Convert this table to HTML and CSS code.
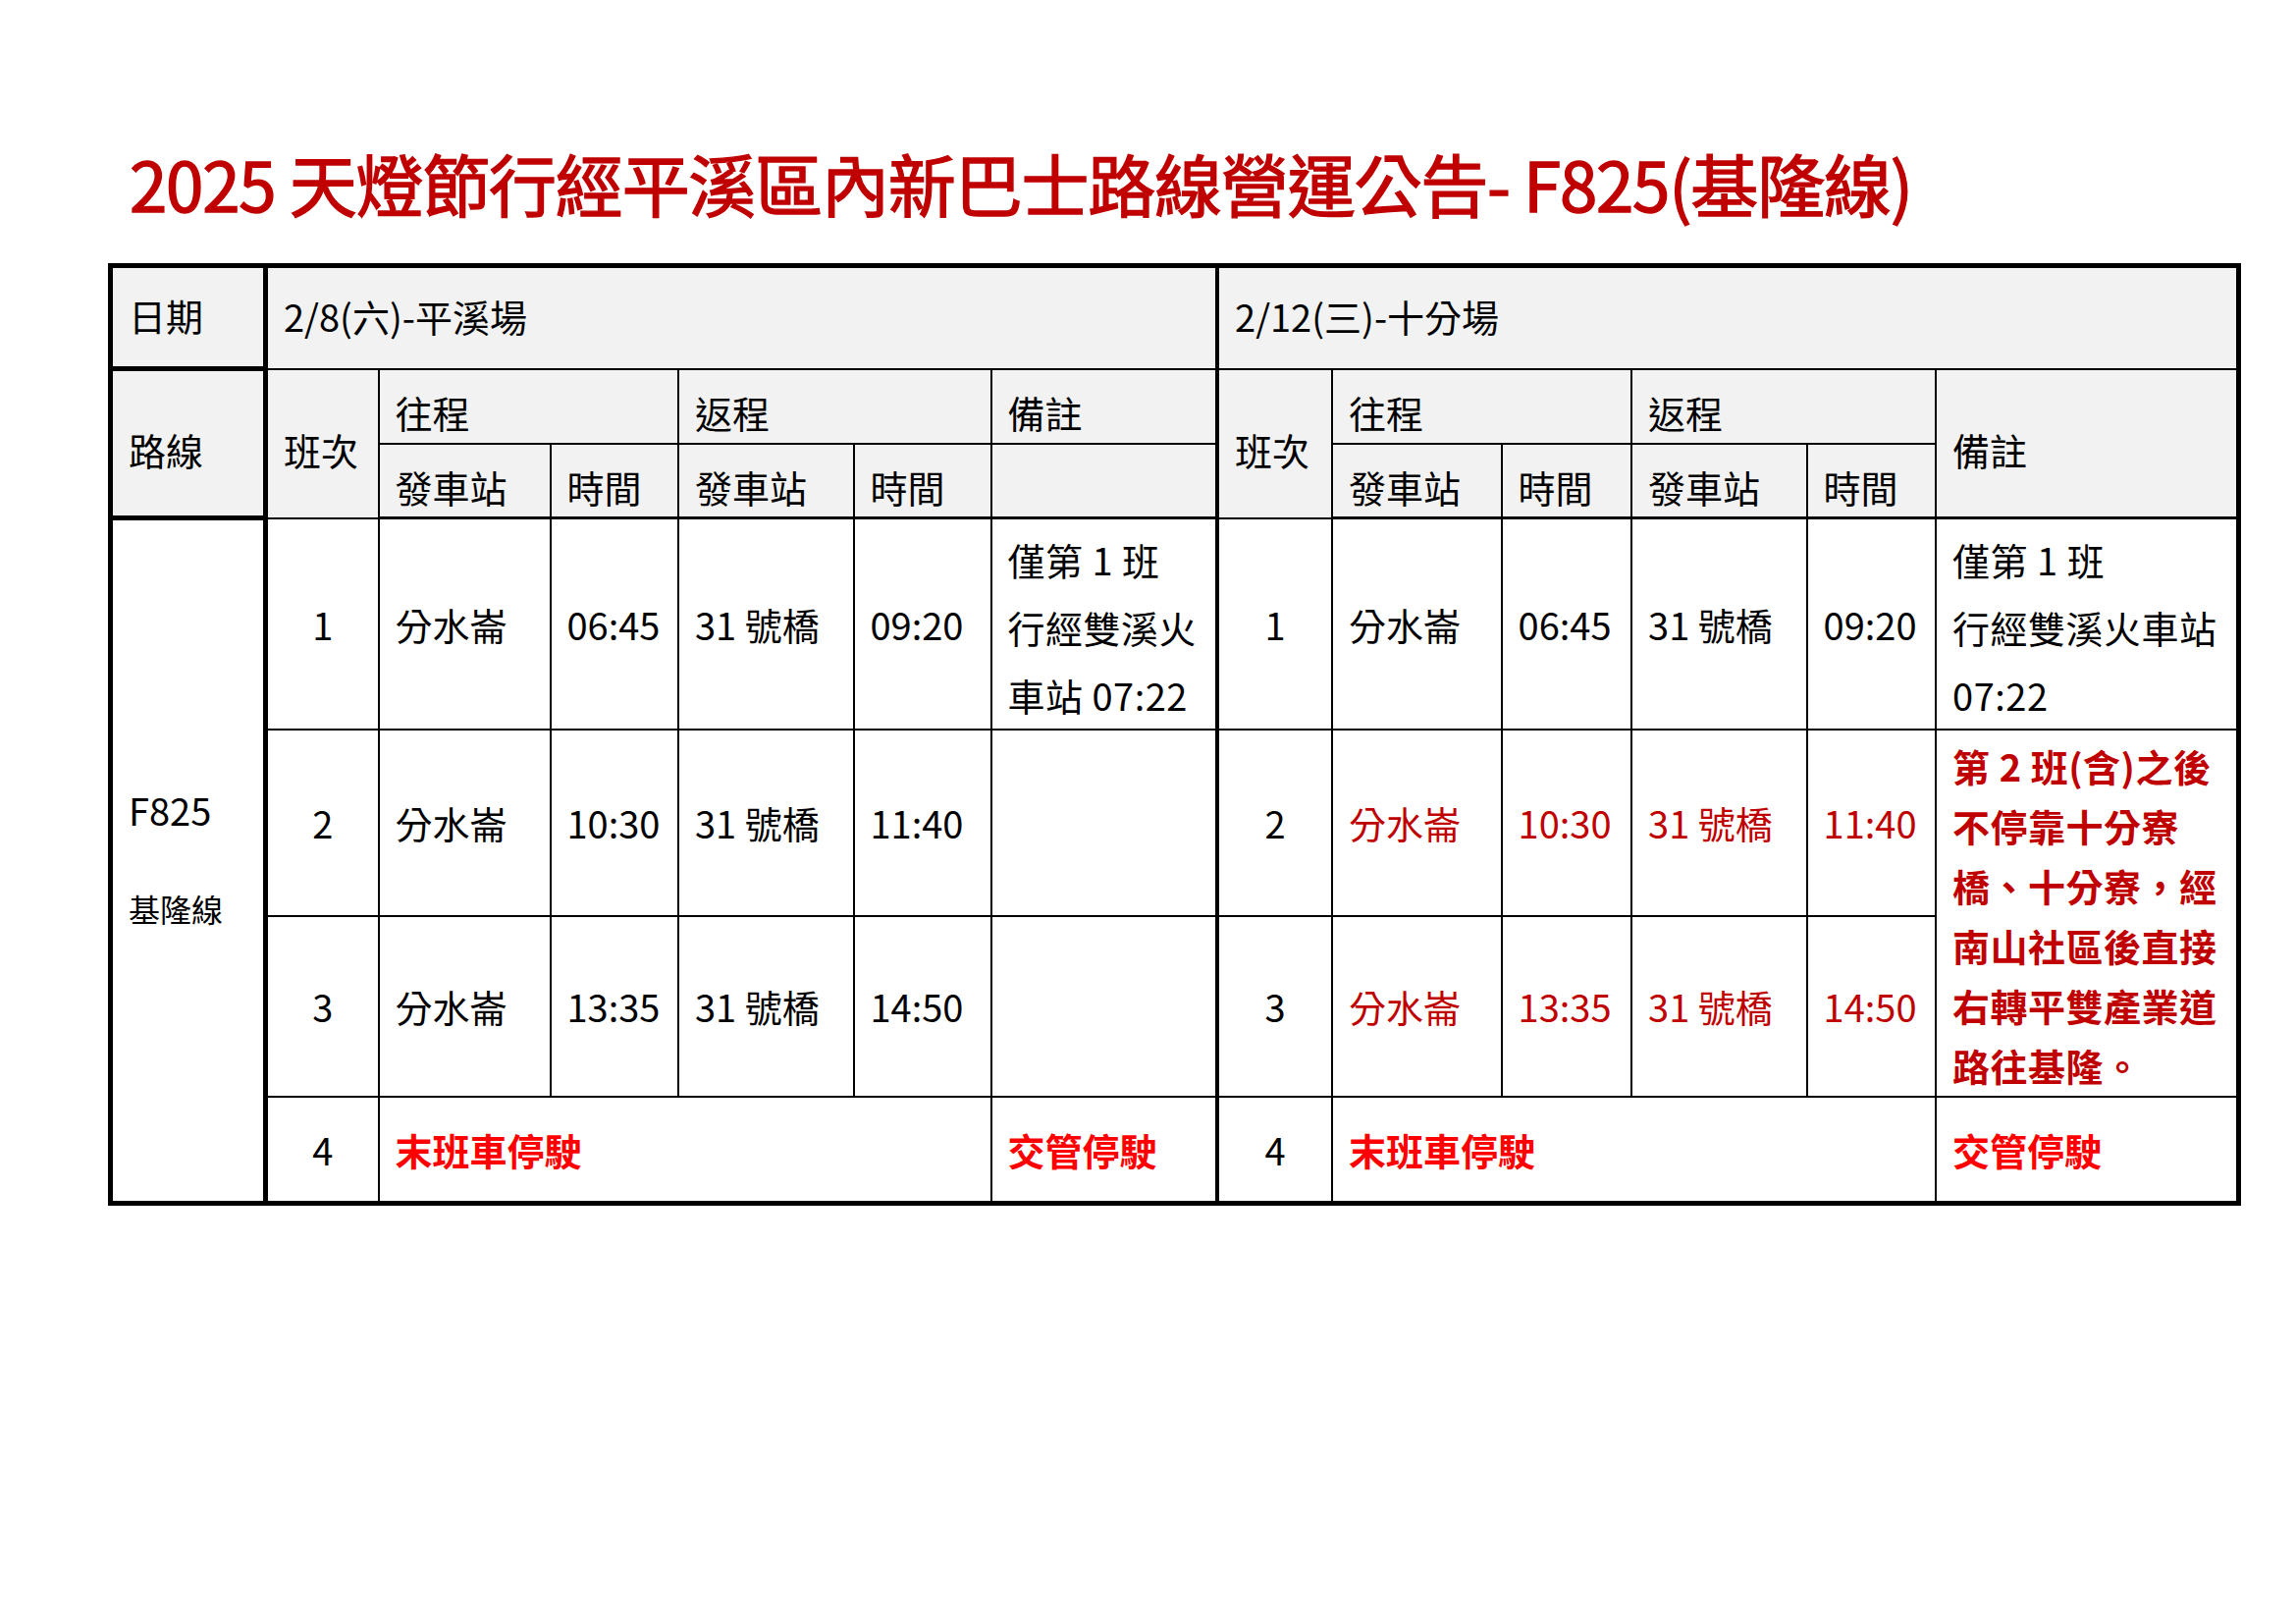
FILE: index.html
```html
<!DOCTYPE html>
<html lang="zh-Hant">
<head>
<meta charset="utf-8">
<title>2025 天燈節 F825(基隆線)</title>
<link rel="stylesheet" href="styles.css">
</head>
<body>
<div class="page">
  <h1 class="title">2025 天燈節行經平溪區內新巴士路線營運公告- F825(基隆線)</h1>
  <table class="schedule">
    <colgroup>
      <col class="c-route">
      <col class="c-no">
      <col class="c-st1">
      <col class="c-t1">
      <col class="c-st2">
      <col class="c-t2">
      <col class="c-note">
      <col class="c-no2">
      <col class="c-st3">
      <col class="c-t3">
      <col class="c-st4">
      <col class="c-t4">
      <col class="c-note2">
    </colgroup>
    <tr class="r-date">
      <td class="hd route-col date-label date">日期</td>
      <td class="hd date" colspan="6">2/8(六)-平溪場</td>
      <td class="hd mid date" colspan="6">2/12(三)-十分場</td>
    </tr>
    <tr class="r-h1">
      <td class="hd route-col route-label low" rowspan="2">路線</td>
      <td class="hd low" rowspan="2">班次</td>
      <td class="hd low" colspan="2">往程</td>
      <td class="hd low" colspan="2">返程</td>
      <td class="hd low">備註</td>
      <td class="hd mid low" rowspan="2">班次</td>
      <td class="hd low" colspan="2">往程</td>
      <td class="hd low" colspan="2">返程</td>
      <td class="hd low hb" rowspan="2">備註</td>
    </tr>
    <tr class="r-h2">
      <td class="hd low hb">發車站</td>
      <td class="hd low hb">時間</td>
      <td class="hd low hb">發車站</td>
      <td class="hd low hb">時間</td>
      <td class="hd low hb"></td>
      <td class="hd low hb">發車站</td>
      <td class="hd low hb">時間</td>
      <td class="hd low hb">發車站</td>
      <td class="hd low hb">時間</td>
    </tr>
    <tr class="r-1">
      <td class="route-col route-name" rowspan="4">
        <div class="route-code">F825</div>
        <div class="route-sub">基隆線</div>
      </td>
      <td class="num">1</td>
      <td>分水崙</td>
      <td>06:45</td>
      <td>31 號橋</td>
      <td>09:20</td>
      <td class="note">僅第 1 班<br>行經雙溪火<br>車站 07:22</td>
      <td class="num mid">1</td>
      <td>分水崙</td>
      <td>06:45</td>
      <td>31 號橋</td>
      <td>09:20</td>
      <td class="note">僅第 1 班<br>行經雙溪火車站<br>07:22</td>
    </tr>
    <tr class="r-2">
      <td class="num">2</td>
      <td>分水崙</td>
      <td>10:30</td>
      <td>31 號橋</td>
      <td>11:40</td>
      <td></td>
      <td class="num mid">2</td>
      <td class="dk">分水崙</td>
      <td class="dk">10:30</td>
      <td class="dk">31 號橋</td>
      <td class="dk">11:40</td>
      <td class="note-bold" rowspan="2">第 2 班(含)之後<br>不停靠十分寮<br>橋、十分寮，經<br>南山社區後直接<br>右轉平雙產業道<br>路往基隆。</td>
    </tr>
    <tr class="r-3">
      <td class="num">3</td>
      <td>分水崙</td>
      <td>13:35</td>
      <td>31 號橋</td>
      <td>14:50</td>
      <td></td>
      <td class="num mid">3</td>
      <td class="dk">分水崙</td>
      <td class="dk">13:35</td>
      <td class="dk">31 號橋</td>
      <td class="dk">14:50</td>
    </tr>
    <tr class="r-4">
      <td class="num">4</td>
      <td class="stop" colspan="4">末班車停駛</td>
      <td class="stop">交管停駛</td>
      <td class="num mid">4</td>
      <td class="stop" colspan="4">末班車停駛</td>
      <td class="stop">交管停駛</td>
    </tr>
  </table>
</div>
</body>
</html>
```
FILE: styles.css
```css
html, body {
  margin: 0;
  padding: 0;
  background: #ffffff;
}

body {
  font-family: "Noto Sans CJK TC", "Noto Sans", sans-serif;
  color: #000000;
}

.page {
  padding: 152px 0 0 110px;
}

.title {
  margin: 0 0 47px 22px;
  font-size: 69px;
  line-height: 69px;
  font-weight: 400;
  letter-spacing: -1.2px;
  color: #c00000;
  -webkit-text-stroke: 1.4px #c00000;
  white-space: nowrap;
}

.schedule {
  border-collapse: collapse;
  table-layout: fixed;
  width: 2168px;
  border: 5px solid #000;
  font-size: 38px;
}

.c-route { width: 158px; }
.c-no { width: 115px; }
.c-st1 { width: 175px; }
.c-t1 { width: 130.5px; }
.c-st2 { width: 178.5px; }
.c-t2 { width: 140px; }
.c-note { width: 230.5px; }
.c-no2 { width: 117px; }
.c-st3 { width: 172.5px; }
.c-t3 { width: 132.5px; }
.c-st4 { width: 178.5px; }
.c-t4 { width: 131.5px; }
.c-note2 { width: 308px; }

.schedule td {
  border: 2px solid #000;
  padding: 0 0 0 16px;
  vertical-align: middle;
  white-space: nowrap;
  line-height: 1.3;
  overflow: hidden;
}

.r-date { height: 105px; }
.r-h1 { height: 76px; }
.r-h2 { height: 76px; }
.r-1 { height: 214px; }
.r-2 { height: 190px; }
.r-3 { height: 184px; }
.r-4 { height: 108px; }

.hd {
  background: #f2f2f2;
}

.schedule td.date {
  padding-bottom: 4px;
}

.schedule td.low {
  padding-top: 12px;
}

.schedule td.hb {
  border-bottom-width: 3px;
}

.schedule td.route-col {
  border-right-width: 5px;
}

.schedule td.date-label,
.schedule td.route-label {
  border-bottom-width: 5px;
}

.schedule td.mid {
  border-left-width: 4px;
}

.schedule td.num {
  text-align: center;
  padding-left: 0;
}

.schedule td.route-name {
  vertical-align: middle;
  padding-bottom: 6px;
}

.route-code {
  line-height: 50px;
}

.route-sub {
  margin-top: 53px;
  font-size: 32px;
  line-height: 44px;
}

.schedule td.note {
  vertical-align: top;
  padding-top: 6px;
  line-height: 69px;
  letter-spacing: 0.5px;
}

.schedule td.note-bold {
  vertical-align: top;
  padding-top: 5px;
  line-height: 61px;
  font-weight: 700;
  color: #c00000;
  letter-spacing: 0.5px;
}

.dk {
  color: #c00000;
}

.stop {
  color: #ff0000;
  font-weight: 700;
}
```
